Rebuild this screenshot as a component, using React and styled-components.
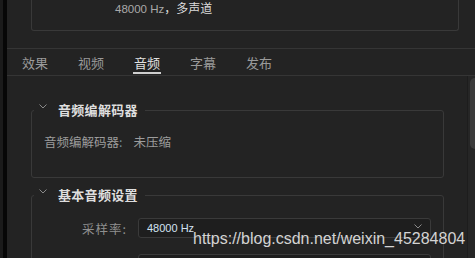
import React from 'react';
import styled, { createGlobalStyle } from 'styled-components';

const GlobalStyle = createGlobalStyle`
  html, body {
    margin: 0;
    padding: 0;
    background: #232323;
    overflow: hidden;
  }
  * {
    box-sizing: border-box;
  }
`;

const CJK = `'Noto Sans CJK SC', 'Liberation Sans', sans-serif`;
const LATIN = `'Liberation Sans', 'Noto Sans CJK SC', sans-serif`;
const BG = '#232323';

const Frame = styled.div`
  position: relative;
  width: 475px;
  height: 258px;
  display: flex;
  overflow: hidden;
  background: ${BG};
  font-family: ${CJK};
`;

const LeftEdge = styled.div`
  width: 7px;
  flex-shrink: 0;
  border-left: 3px solid #1b1b1b;
  background: #070707;
`;

const Main = styled.div`
  flex: 1;
  display: flex;
  flex-direction: column;
  min-width: 0;
`;

const TopArea = styled.div`
  height: 48px;
  flex-shrink: 0;
  padding-left: 24px;
  padding-right: 16px;
`;

const InfoBox = styled.div`
  height: 41px;
  margin-top: -10px;
  border: 1px solid #393939;
  border-top: none;
  border-radius: 0 0 3px 3px;
  padding-left: 83px;
  padding-top: 9px;
  font-size: 12px;
  line-height: 18px;
  color: #dcdcdc;
`;

const Hz = styled.span`
  font-family: ${LATIN};
  color: #a9a9a9;
  font-size: 11.5px;
`;

const TabBar = styled.div`
  height: 28px;
  flex-shrink: 0;
  display: flex;
  align-items: stretch;
  gap: 30px;
  padding-left: 15px;
  border-top: 1px solid #353535;
  border-bottom: 1px solid #353535;
`;

const Tab = styled.div`
  position: relative;
  width: 26px;
  display: flex;
  align-items: center;
  font-size: 13px;
  white-space: nowrap;
  color: ${(p) => (p.active ? '#e0e0e0' : '#9a9a9a')};

  &::after {
    content: '';
    display: ${(p) => (p.active ? 'block' : 'none')};
    position: absolute;
    left: -1px;
    right: -1px;
    bottom: 1px;
    height: 2px;
    background: #cfcfcf;
  }
`;

const Body = styled.div`
  flex: 1;
  display: flex;
  min-height: 0;
`;

const Scroller = styled.div`
  flex: 1;
  padding: 0 23px 0 24px;
  display: flex;
  flex-direction: column;
`;

const Scrollbar = styled.div`
  width: 11px;
  flex-shrink: 0;
  border-left: 1px solid #1d1d1d;
  background: #262626;
  padding: 2px 0 0 2px;
`;

const Thumb = styled.div`
  width: 9px;
  height: 71px;
  border-radius: 5px 0 0 5px;
  background: #3b3b3b;
`;

const Section = styled.section`
  flex-shrink: 0;
  margin-top: ${(p) => p.mt}px;
  height: ${(p) => p.h}px;
  padding: 0 12px;
  border: 1px solid #393939;
  border-radius: 3px;
`;

const Header = styled.div`
  display: flex;
  align-items: center;
  width: fit-content;
  height: 18px;
  margin: -11px 0 0 -10px;
  padding: 0 7px 0 5px;
  background: ${BG};
  font-size: 13px;
  font-weight: bold;
  color: #dedede;
  letter-spacing: 0.3px;
`;

const Chevron = styled.svg`
  width: 8px;
  height: 5px;
  margin-right: 11px;
  margin-top: -5px;
`;

const InfoLine = styled.div`
  margin-top: 15px;
  font-size: 12.5px;
  line-height: 18px;
  color: #9c9c9c;
`;

const Colon = styled.span`
  color: #6f8c99;
  margin-right: 11px;
`;

const FieldRow = styled.div`
  display: flex;
  align-items: center;
  height: 20px;
  margin-top: ${(p) => p.mt}px;
`;

const Label = styled.div`
  width: 83px;
  text-align: right;
  font-size: 12.5px;
  color: #8f8f8f;
  letter-spacing: 1px;
  white-space: nowrap;
`;

const Select = styled.div`
  position: relative;
  margin-left: 11px;
  width: 293px;
  height: 20px;
  display: flex;
  align-items: center;
  padding-left: 8px;
  border: 1px solid #3a3a3a;
  border-radius: 3px;
  background: #1e1e1e;
  font-family: ${LATIN};
  font-size: 11px;
  color: #d3e2f2;
`;

const SelectArrow = styled.svg`
  position: absolute;
  right: 8px;
  top: 5px;
  width: 8px;
  height: 5px;
`;

const Watermark = styled.div`
  position: absolute;
  left: 193px;
  top: 229px;
  font-family: ${LATIN};
  font-size: 16px;
  line-height: 19px;
  color: rgba(238, 238, 238, 0.88);
  white-space: nowrap;
  pointer-events: none;
`;

const Down = ({ as: Comp = Chevron }) => (
  <Comp viewBox="0 0 8 5">
    <path d="M0.5 0.5 L4 4 L7.5 0.5" fill="none" stroke="#8a8a8a" strokeWidth="1" />
  </Comp>
);

const tabs = ['效果', '视频', '音频', '字幕', '发布'];

export default function App() {
  return (
    <>
      <GlobalStyle />
      <Frame>
        <LeftEdge />
        <Main>
          <TopArea>
            <InfoBox>
              <Hz>48000 Hz</Hz>，多声道
            </InfoBox>
          </TopArea>
          <TabBar>
            {tabs.map((t) => (
              <Tab key={t} active={t === '音频'}>
                {t}
              </Tab>
            ))}
          </TabBar>
          <Body>
            <Scroller>
              <Section mt={34} h={68}>
                <Header>
                  <Down />
                  音频编解码器
                </Header>
                <InfoLine>
                  音频编解码器<Colon>:</Colon>未压缩
                </InfoLine>
              </Section>
              <Section mt={17} h={120}>
                <Header>
                  <Down />
                  基本音频设置
                </Header>
                <FieldRow mt={15}>
                  <Label>采样率:</Label>
                  <Select>
                    48000 Hz
                    <Down as={SelectArrow} />
                  </Select>
                </FieldRow>
                <FieldRow mt={16}>
                  <Label>样本大小:</Label>
                  <Select>
                    16 位
                    <Down as={SelectArrow} />
                  </Select>
                </FieldRow>
              </Section>
            </Scroller>
            <Scrollbar>
              <Thumb />
            </Scrollbar>
          </Body>
        </Main>
        <Watermark>https://blog.csdn.net/weixin_45284804</Watermark>
      </Frame>
    </>
  );
}
